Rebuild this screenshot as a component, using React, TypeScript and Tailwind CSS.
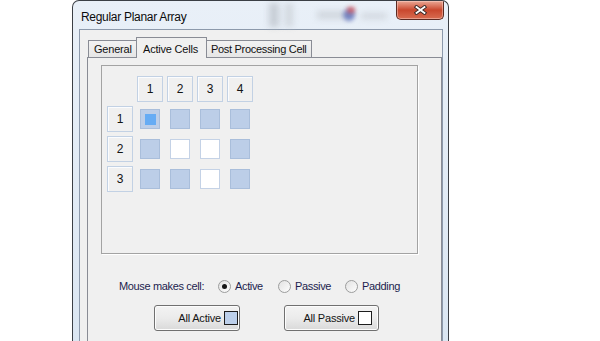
import { Fragment } from 'react';
import type { ReactNode } from 'react';

type Cell = 'mark' | 'active' | 'passive';

const rows: Cell[][] = [
  ['mark', 'active', 'active', 'active'],
  ['active', 'passive', 'passive', 'active'],
  ['active', 'active', 'passive', 'active'],
];

const HeaderBtn = ({ children }: { children: ReactNode }) => (
  <div className="w-[26px] h-[26px] flex items-center justify-center border border-[#c2d1e4] bg-[#f0f0f0] shadow-[inset_1px_1px_0_#fbfcfe] text-[12px] text-[#141414]">
    {children}
  </div>
);

const CellBox = ({ kind }: { kind: Cell }) => (
  <div className="w-[26px] h-[26px] flex items-center justify-center">
    {kind === 'passive' ? (
      <div className="w-[20px] h-[20px] bg-white border border-[#c4d2e6]" />
    ) : (
      <div className="w-[20px] h-[20px] bg-[#bccee8] border border-[#a9bedb] flex items-center justify-center">
        {kind === 'mark' && <div className="w-[11px] h-[11px] bg-[#66acf4]" />}
      </div>
    )}
  </div>
);

const Radio = ({ checked }: { checked?: boolean }) => (
  <span className="w-[13px] h-[13px] rounded-full border border-[#9c9d9d] bg-gradient-to-br from-[#e2e2e2] to-[#fdfdfd] flex items-center justify-center">
    {checked && <span className="w-[5px] h-[5px] rounded-full bg-[#151515]" />}
  </span>
);

export default function App() {
  return (
    <div className="w-[600px] h-[341px] bg-white overflow-hidden font-['Liberation_Sans',Arial,sans-serif]">
      <div className="ml-[72px] w-[377px] h-[341px] flex flex-col rounded-t-[7px] border border-b-0 border-[#3b3f45] bg-gradient-to-b from-[#e9f0f8] to-[#dbe6f2] overflow-hidden">
        {/* title bar */}
        <div className="relative h-[28px] flex items-start justify-between">
          <div className="absolute left-[196px] top-[2px] w-[10px] h-[24px] bg-[#b9bfc7] blur-[3px] opacity-70" />
          <div className="absolute left-[212px] top-[2px] w-[8px] h-[24px] bg-[#c3c8ce] blur-[3px] opacity-60" />
          <div className="absolute left-[244px] top-[10px] w-[30px] h-[8px] bg-[#c6cbd2] blur-[3px] opacity-70" />
          <div className="absolute left-[270px] top-[8px] w-[12px] h-[12px] rounded-full bg-[#5d6fb8] blur-[2px] opacity-80" />
          <div className="absolute left-[274px] top-[6px] w-[8px] h-[6px] rounded-full bg-[#d0444a] blur-[2px] opacity-80" />
          <div className="absolute left-[288px] top-[12px] w-[26px] h-[6px] bg-[#c2c7ce] blur-[3px] opacity-60" />
          <span className="relative mt-[7px] ml-[8px] text-[12px] tracking-[-0.3px] text-[#0c0c0c]">Regular Planar Array</span>
          <div className="relative mr-[4px] w-[48px] h-[19px] rounded-b-[5px] border border-t-0 border-[#5b2a22] bg-gradient-to-b from-[#e9a795] via-[#c9472d] to-[#d86c50] shadow-[inset_0_0_0_1px_rgba(255,220,210,0.45)] flex items-center justify-center">
            <svg width="13" height="10" viewBox="0 0 13 10">
              <path d="M2.5 2 L10.5 8 M10.5 2 L2.5 8" stroke="#3a2a28" strokeWidth="3.6" strokeLinecap="square" />
              <path d="M2.5 2 L10.5 8 M10.5 2 L2.5 8" stroke="#ffffff" strokeWidth="1.8" strokeLinecap="square" />
            </svg>
          </div>
        </div>

        {/* client area */}
        <div className="flex-1 ml-[6px] mr-[5px] border-l border-t border-r border-[#8c99ab] bg-[#f0f0f0] pl-[7px] flex flex-col">
          {/* tabs */}
          <div className="mt-[7px] h-[20px] flex items-end pl-[1px] text-[11px] text-[#111]">
            <div className="w-[50px] h-[17px] border border-b-0 border-[#898c95] bg-gradient-to-b from-[#f2f2f2] to-[#e6e6e6] flex items-center pl-[5px] tracking-[-0.2px]">
              General
            </div>
            <div className="relative z-10 -ml-[2px] -mb-[1px] w-[71px] h-[21px] border border-b-0 border-[#898c95] bg-[#f0f0f0] flex items-start pt-[3px] pl-[6px] tracking-[-0.2px]">
              Active Cells
            </div>
            <div className="-ml-[1px] w-[106px] h-[17px] border border-b-0 border-[#898c95] bg-gradient-to-b from-[#f2f2f2] to-[#e6e6e6] flex items-center pl-[4px] tracking-[-0.3px]">
              Post Processing Cell
            </div>
          </div>

          {/* tab page */}
          <div className="flex-1 border border-b-0 border-[#898c95] bg-[#f0f0f0] flex flex-col">
            <div className="ml-[13px] mt-[7px] w-[317px] h-[189px] border border-[#a3a3a3] shadow-[1px_1px_0_#ffffff] pl-[5px] pt-[10px]">
              <div className="grid grid-cols-[repeat(5,26px)] auto-rows-[26px] gap-[4px]">
                <div />
                {[1, 2, 3, 4].map((n) => (
                  <HeaderBtn key={n}>{n}</HeaderBtn>
                ))}
                {rows.map((row, r) => (
                  <Fragment key={r}>
                    <HeaderBtn>{r + 1}</HeaderBtn>
                    {row.map((c, i) => (
                      <CellBox key={i} kind={c} />
                    ))}
                  </Fragment>
                ))}
              </div>
            </div>

            {/* mouse mode */}
            <div className="mt-[24px] ml-[31px] h-[16px] flex items-center text-[11px] text-[#1c1d4e] tracking-[-0.35px]">
              <span className="w-[99px]">Mouse makes cell:</span>
              <div className="w-[60px] flex items-center gap-[4px]">
                <Radio checked />
                <span>Active</span>
              </div>
              <div className="w-[67px] flex items-center gap-[4px]">
                <Radio />
                <span>Passive</span>
              </div>
              <div className="flex items-center gap-[4px]">
                <Radio />
                <span>Padding</span>
              </div>
            </div>

            {/* buttons */}
            <div className="mt-[11px] ml-[66px] flex text-[11px] text-[#151515] tracking-[-0.2px]">
              <div className="w-[86px] h-[26px] rounded-[3px] border border-[#707070] bg-gradient-to-b from-[#f3f3f3] via-[#ebebeb] to-[#d9d9d9] shadow-[inset_0_0_0_1px_#fcfcfc] flex items-center justify-end gap-[3px] pr-[1px]">
                <span>All Active</span>
                <span className="w-[14px] h-[14px] border border-[#1d1d1d] bg-[#bccfea]" />
              </div>
              <div className="ml-[44px] w-[95px] h-[26px] rounded-[3px] border border-[#707070] bg-gradient-to-b from-[#f3f3f3] via-[#ebebeb] to-[#d9d9d9] shadow-[inset_0_0_0_1px_#fcfcfc] flex items-center justify-end gap-[3px] pr-[6px]">
                <span>All Passive</span>
                <span className="w-[14px] h-[14px] border border-[#1d1d1d] bg-white" />
              </div>
            </div>
          </div>
        </div>
      </div>
    </div>
  );
}
